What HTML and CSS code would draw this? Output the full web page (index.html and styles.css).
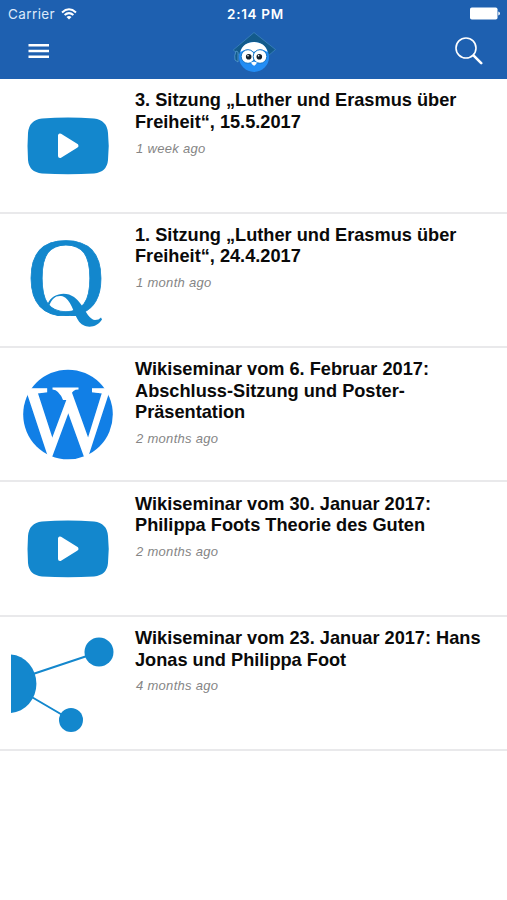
FILE: index.html
```html
<!DOCTYPE html>
<html lang="de">
<head>
  <meta charset="UTF-8">
  <meta name="viewport" content="width=device-width, initial-scale=1.0">
  <title>Wikiseminar</title>
  <link rel="stylesheet" href="styles.css">
</head>
<body>
  <header class="header">
    <!-- status bar -->
    <div class="status-bar">
      <div class="carrier">
        <span>Carrier</span>
        <svg class="wifi" width="16" height="12" viewBox="0 0 16 12" fill="none" stroke="#fff" stroke-width="2">
          <path d="M1 4.4Q8-1.8 15 4.4"/>
          <path d="M3.6 7.1Q8 3.2 12.4 7.1"/>
          <path d="M8 11.6L5.5 9Q8 7 10.5 9Z" fill="#fff" stroke="none"/>
        </svg>
      </div>
      <div class="time">2:14 PM</div>
      <svg class="battery" width="30" height="13" viewBox="0 0 30 13" fill="#fff">
        <rect x="0" y="0.5" width="27.5" height="12" rx="1.8"/>
        <path d="M28.3 4.5Q30 5 30 6.5T28.3 8.5Z"/>
      </svg>
    </div>
    <!-- navigation -->
    <nav class="nav-bar">
      <button class="nav-button" aria-label="Menu">
        <svg width="22" height="16" viewBox="0 0 22 16" stroke="#fff" stroke-width="2.4">
          <path d="M.5 2.3H21M.5 8H21M.5 13.7H21"/>
        </svg>
      </button>
      <svg class="logo" width="44" height="42" viewBox="0 0 44 42">
        <path d="M22 1.5L43.5 18.5L36 25H9L1.2 19Z" fill="#135b8c" stroke="#3c83bc" stroke-width=".8"/>
        <path d="M4 20Q2 25 3 29L6 31V21Z" fill="#135b8c" stroke="#579cce" stroke-width=".8"/>
        <circle cx="22" cy="26" r="15" fill="#238df5"/>
        <path d="M8.5 21C10.500 7.500 33.500 7.500 35.5 21Q29 16 22 21Q15 16 8.5 21Z" fill="#fff"/>
        <circle cx="16" cy="25.5" r="6.8" fill="#fff" stroke="#1676c6" stroke-width="1"/>
        <circle cx="28" cy="25.5" r="6.8" fill="#fff" stroke="#1676c6" stroke-width="1"/>
        <circle cx="16.7" cy="25.8" r="2.8" fill="#17202a"/>
        <circle cx="27.3" cy="25.8" r="2.8" fill="#17202a"/>
        <circle cx="16" cy="24.8" r=".8" fill="#fff"/>
        <circle cx="26.6" cy="24.8" r=".8" fill="#fff"/>
        <path d="M19 31.5Q22 29.8 25 31.5Q24 33.8 22 34.8Q20 33.8 19 31.5Z" fill="#fff"/>
      </svg>
      <button class="nav-button" aria-label="Search">
        <svg width="28" height="28" viewBox="0 0 28 28" fill="none" stroke="#fff" stroke-linecap="round">
          <circle cx="11" cy="11" r="10" stroke-width="1.6"/>
          <path d="M18.7 18.7L26.2 26.2" stroke-width="2.6"/>
        </svg>
      </button>
    </nav>
  </header>

  <main class="list">
    <article class="item">
      <svg class="item-icon" viewBox="0 0 136 132">
        <path d="M42 39.5Q68 37.5 94 39.5Q107 41 108 54Q109.5 67 108 81Q107 93 94 94.5Q68 96 42 94.5Q29 93 28 81Q27 67 28 54Q29 41 42 39.5Z" fill="#1387cd"/>
        <path d="M60 56.5V77L76.5 66.7Z" fill="#fff" stroke="#fff" stroke-width="4" stroke-linejoin="round"/>
      </svg>
      <div class="item-content">
        <h2 class="item-title">3. Sitzung „Luther und Erasmus über Freiheit“, 15.5.2017</h2>
        <p class="item-date">1 week ago</p>
      </div>
    </article>

    <article class="item">
      <svg class="item-icon" viewBox="0 0 136 132">
        <clipPath id="ring"><rect x="20" y="20" width="100" height="82"/></clipPath>
        <text class="letter-q" x="26.5" y="100.5" textLength="79" lengthAdjust="spacingAndGlyphs" clip-path="url(#ring)">Q</text>
        <!-- curled tail -->
        <path d="M47.5 90C52 79 66 77 74 83C84 90 87 105 95 106Q99 106 101 103.5L102 105.5C97 114 84 116 78 106C73 97 70 83 61 82C55 81.5 52 85 49.5 91Z" fill="#1387cd"/>
      </svg>
      <div class="item-content">
        <h2 class="item-title">1. Sitzung „Luther und Erasmus über Freiheit“, 24.4.2017</h2>
        <p class="item-date">1 month ago</p>
      </div>
    </article>

    <article class="item">
      <svg class="item-icon" viewBox="0 0 136 132">
        <clipPath id="badge"><circle cx="68" cy="66.5" r="45.5"/></clipPath>
        <circle cx="68" cy="66.5" r="44.8" fill="#117fe6"/>
        <text class="letter-w" x="22" y="107.5" textLength="92" lengthAdjust="spacingAndGlyphs" clip-path="url(#badge)">W</text>
        <!-- middle serif -->
        <path d="M52.5 39.5H78.5V41.5Q72 41.5 71.5 47L72 52H63Q59 42 52.5 41.5Z" fill="#fff"/>
      </svg>
      <div class="item-content">
        <h2 class="item-title">Wikiseminar vom 6. Februar 2017: Abschluss-Sitzung und Poster-Präsentation</h2>
        <p class="item-date">2 months ago</p>
      </div>
    </article>

    <article class="item">
      <svg class="item-icon" viewBox="0 0 136 132">
        <path d="M42 39.5Q68 37.5 94 39.5Q107 41 108 54Q109.5 67 108 81Q107 93 94 94.5Q68 96 42 94.5Q29 93 28 81Q27 67 28 54Q29 41 42 39.5Z" fill="#1387cd"/>
        <path d="M60 56.5V77L76.5 66.7Z" fill="#fff" stroke="#fff" stroke-width="4" stroke-linejoin="round"/>
      </svg>
      <div class="item-content">
        <h2 class="item-title">Wikiseminar vom 30. Januar 2017: Philippa Foots Theorie des Guten</h2>
        <p class="item-date">2 months ago</p>
      </div>
    </article>

    <article class="item">
      <svg class="item-icon" viewBox="0 0 136 132" fill="#1387cd">
        <path d="M11 37.5A27 29.3 0 0 1 11 96Z"/>
        <path d="M30 58L99 35M30 79L71 103" stroke="#1387cd" stroke-width="2"/>
        <circle cx="99" cy="35" r="14.5"/>
        <circle cx="71" cy="103" r="12"/>
      </svg>
      <div class="item-content">
        <h2 class="item-title">Wikiseminar vom 23. Januar 2017: Hans Jonas und Philippa Foot</h2>
        <p class="item-date">4 months ago</p>
      </div>
    </article>
  </main>
</body>
</html>
```
FILE: styles.css
```css
* {
  margin: 0;
  padding: 0;
  box-sizing: border-box;
}

body {
  font-family: "Liberation Sans", Arial, sans-serif;
  background: #fff;
  color: #0a0a0a;
  min-height: 100vh;
}

/* header */
.header {
  height: 79.2px;
  background: #1e60b0;
  color: #fff;
}

.status-bar {
  display: grid;
  grid-template-columns: 1fr auto 1fr;
  align-items: center;
  height: 27px;
  padding: 0 7px 0 8px;
  font-family: Inter, sans-serif;
  font-size: 13.5px;
}

.carrier {
  display: flex;
  align-items: center;
  gap: 6px;
  color: #dce9fa;
  letter-spacing: 0.4px;
}

.time {
  padding-left: 3px;
  font-weight: 600;
  letter-spacing: 0.7px;
}

.battery {
  justify-self: end;
}

.nav-bar {
  display: flex;
  align-items: center;
  justify-content: space-between;
  height: 48px;
  padding: 0 24px 0 28px;
}

.nav-button {
  display: flex;
  background: none;
  border: none;
}

.logo {
  margin: 2px 0 0 2px;
}

/* list */
.item {
  display: flex;
  height: 134.4px;
  border-bottom: 2px solid #e9e9eb;
}

.item-icon {
  flex: none;
  width: 136px;
  height: 132px;
}

.letter-q,
.letter-w {
  font-family: "Liberation Serif", serif;
}

.letter-q {
  font-size: 113px;
  fill: #1387cd;
  stroke: #1387cd;
  stroke-width: 0.8px;
}

.letter-w {
  font-size: 101px;
  fill: #fff;
  stroke: #fff;
  stroke-width: 1.4px;
}

.item-content {
  flex: 1;
  padding: 11.2px 16px 0 0;
  margin-left: -1px;
}

.item-title {
  font-size: 18.2px;
  font-weight: bold;
  line-height: 21.6px;
}

.item-date {
  margin: 7.2px 0 0 1px;
  font-size: 13px;
  font-style: italic;
  line-height: 16px;
  letter-spacing: 0.3px;
  color: #858585;
}
```
